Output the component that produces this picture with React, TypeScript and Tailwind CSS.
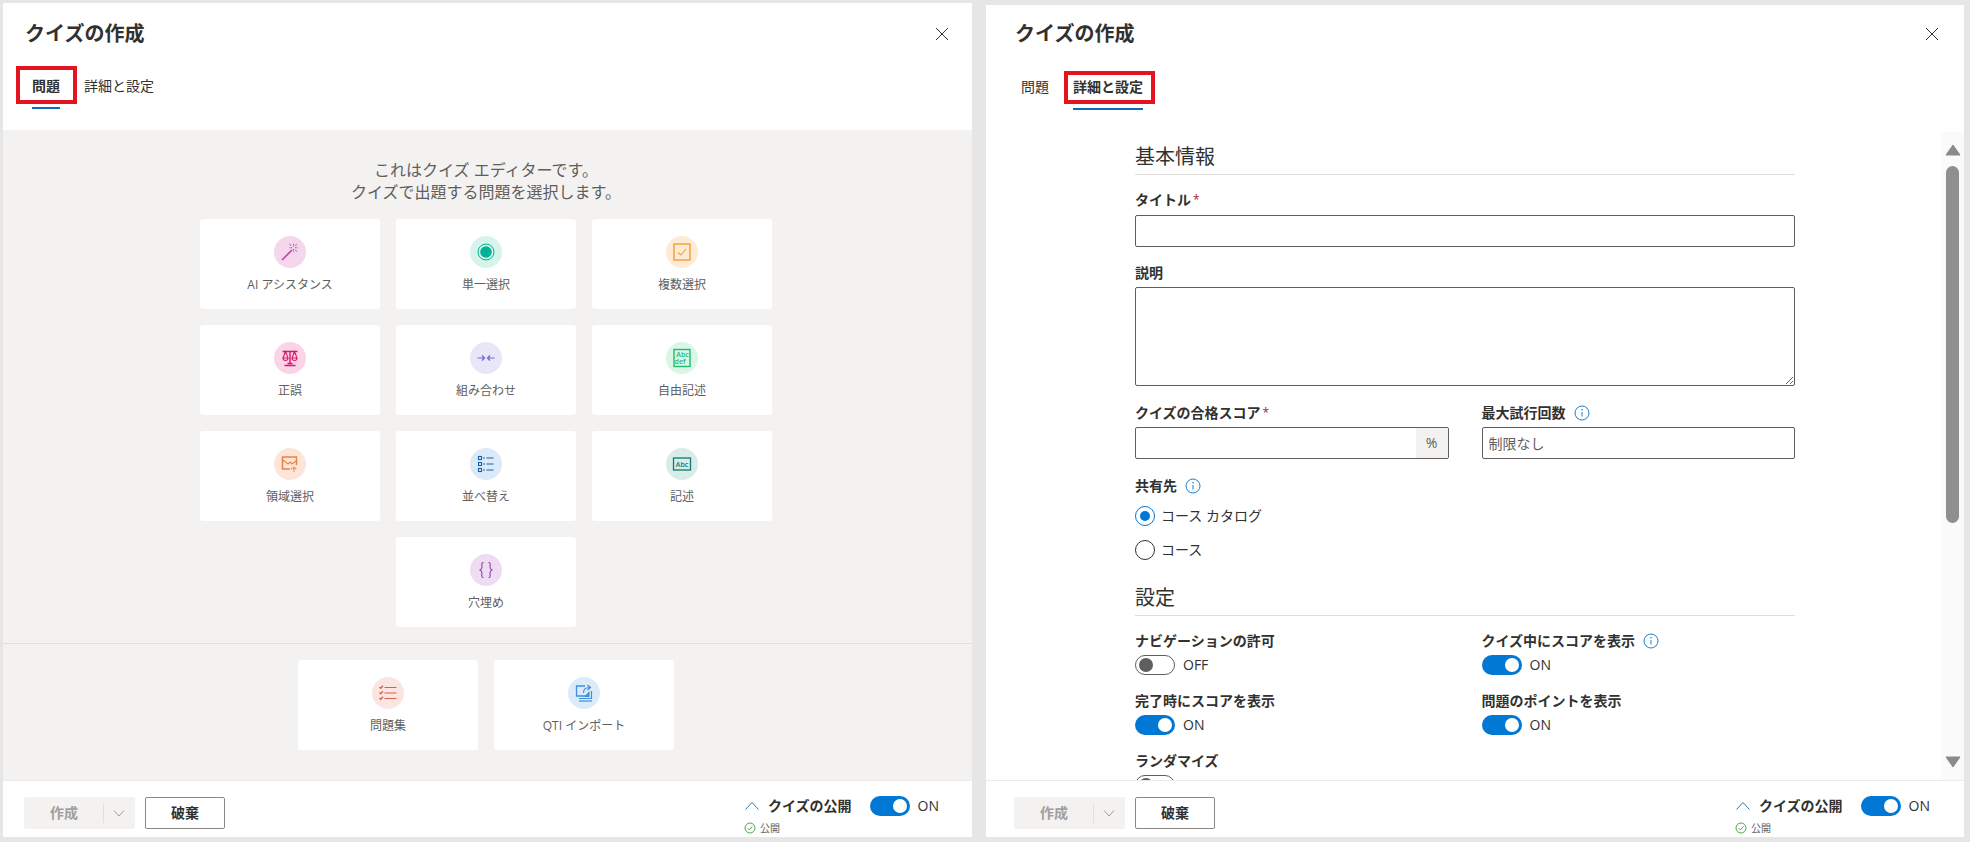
import type { ReactNode } from 'react';

const Svg = ({ children, className = '' }: { children: ReactNode; className?: string }) => (
  <svg viewBox="0 0 20 20" className={`w-5 h-5 ${className}`} fill="none" stroke="currentColor">
    {children}
  </svg>
);

const WandIcon = () => (
  <Svg className="text-[#c23c9e]">
    <path d="M2 18L12 8" strokeWidth="1.5" />
    <path d="M13.500 2v2.500M13.500 7v2.500M9.500 5.800h2.500M15 5.800h3M15.500 3.500l1.500-1.500M15.500 8l1.500 1.500M11 3.500L9.500 2" strokeWidth="1.100" strokeDasharray="1 .5" />
  </Svg>
);
const RadioIcon = () => (
  <Svg className="text-[#00b294]">
    <circle cx="10" cy="10" r="8" strokeWidth="1" />
    <circle cx="10" cy="10" r="5.800" fill="currentColor" stroke="none" />
  </Svg>
);
const CheckIcon = () => (
  <Svg className="text-[#f5a142]">
    <rect x="2" y="2" width="16" height="16" strokeWidth="1.500" />
    <path d="M6 10.500l3 2.500 5-6" strokeWidth="1.100" />
  </Svg>
);
const ScalesIcon = () => (
  <Svg className="text-[#d8186f]">
    <path d="M2.500 3.500h15M10 3.500v12M4.500 17.500h11M7.500 15.500h5" strokeWidth="1.400" />
    <path d="M5.500 3.500L3 10h5zM14.500 3.500L12 10h5zM3 10a2.500 2.500 0 0 0 5 0M12 10a2.500 2.500 0 0 0 5 0" strokeWidth="1.100" />
  </Svg>
);
const MatchIcon = () => (
  <Svg className="text-[#6a68d4]">
    <path d="M1.500 10h7M6 7.500L8.500 10 6 12.500M18.500 10h-7M14 7.500L11.500 10l2.500 2.500" strokeWidth="1.200" />
  </Svg>
);
const BoxTextIcon = () => (
  <Svg className="text-[#22bb72]">
    <rect x="2" y="1.500" width="16" height="17" strokeWidth="1.400" />
    <text x="10.500" y="8.500" fontSize="7" fontWeight="600" textAnchor="middle" fill="currentColor" stroke="none" fontFamily="Open Sans">Abc</text>
    <text x="8" y="15.500" fontSize="7" fontWeight="600" textAnchor="middle" fill="currentColor" stroke="none" fontFamily="Open Sans">def</text>
  </Svg>
);
const AreaIcon = () => (
  <Svg className="text-[#e9843f]">
    <path d="M16.500 11V3H2.500v12H10" strokeWidth="1.500" />
    <path d="M3 6l5 4 2-2 2 2 4-3" strokeWidth="1.100" />
    <path d="M14 12.500v6M11 14.500h6" strokeWidth="1.400" strokeDasharray="1.300 .7" />
  </Svg>
);
const OrderIcon = () => (
  <Svg className="text-[#1264b5]">
    <rect x="2.500" y="2.500" width="3" height="3" strokeWidth="1.100" />
    <rect x="2.500" y="8.500" width="3" height="3" strokeWidth="1.100" />
    <rect x="2.500" y="14.500" width="3" height="3" strokeWidth="1.100" />
    <path d="M7 4h2M10.500 4h7M7 10h2M10.500 10h7M7 16h2M10.500 16h7" strokeWidth="1.100" />
  </Svg>
);
const AbcIcon = () => (
  <Svg className="text-[#12796f]">
    <rect x="1.500" y="4" width="17" height="12" strokeWidth="1.300" />
    <text x="10" y="12.500" fontSize="7" fontWeight="600" textAnchor="middle" fill="currentColor" stroke="none" fontFamily="Open Sans">Abc</text>
  </Svg>
);
const BracesIcon = () => (
  <Svg className="text-[#8d44ad]">
    <path d="M7.500 2.500C5 2.500 6 5 6 7s-1 2.500-2 3c1 .5 2 1 2 3s-1 4.500 1.500 4.500" strokeWidth="1.100" />
    <path d="M12.500 2.500C15 2.500 14 5 14 7s1 2.500 2 3c-1 .5-2 1-2 3s1 4.500-1.500 4.500" strokeWidth="1.100" />
  </Svg>
);
const BankIcon = () => (
  <Svg className="text-[#d2644f]">
    <path d="M6.500 4.500h12M6.500 10h12M6.500 15.500h12" strokeWidth="1.200" />
    <path d="M1.500 4l1.200 1.200L5 2.800M1.500 9.500l1.200 1.200L5 8.300M1.500 15l1.200 1.200L5 13.800" strokeWidth="1.300" />
  </Svg>
);
const ImportIcon = () => (
  <Svg className="text-[#3d8fdb]">
    <path d="M11 3H2.500v10H15" strokeWidth="1.300" />
    <path d="M5 15.500h12.500V8" strokeWidth="1.200" />
    <path d="M5 18h13" strokeWidth="1.200" />
    <path d="M15.500 8V14H10z" fill="currentColor" stroke="none" />
    <path d="M9.500 10c0-3.500 2.500-5.500 6-5.500M13.500 2l3 2.500-3 2.500" strokeWidth="1.200" />
  </Svg>
);

const Chevron = ({ up = false, className = '' }: { up?: boolean; className?: string }) => (
  <svg viewBox="0 0 16 16" className={`w-4 h-4 ${className}`} fill="none" stroke="currentColor" strokeWidth="1">
    <path d={up ? 'M1.500 11.500L8 4.500l6.500 7' : 'M3 5.500L8 11l5-5.500'} />
  </svg>
);

const Close = () => (
  <svg viewBox="0 0 14 14" className="w-3.5 h-3.5 text-[#323130]" fill="none" stroke="currentColor" strokeWidth="1">
    <path d="M1 1l12 12M13 1L1 13" />
  </svg>
);

const Info = () => (
  <svg viewBox="0 0 16 16" className="w-4 h-4 text-[#1a7fce]" fill="none" stroke="currentColor">
    <circle cx="8" cy="8" r="7" strokeWidth="1" />
    <path d="M8 7v4.500" strokeWidth="1" />
    <circle cx="8" cy="4.800" r=".8" fill="currentColor" stroke="none" />
  </svg>
);

function Toggle({ on = true }: { on?: boolean }) {
  return (
    <div className={`w-10 h-5 rounded-full flex items-center px-[3px] ${on ? 'bg-[#0078d4] justify-end' : 'bg-white border border-[#605e5c] justify-start'}`}>
      <div className={`w-3.5 h-3.5 rounded-full ${on ? 'bg-white' : 'bg-[#605e5c]'}`} />
    </div>
  );
}

function ToggleRow({ on = true }: { on?: boolean }) {
  return (
    <div className="flex items-center gap-2 mt-1 h-5">
      <Toggle on={on} />
      <span className="text-sm text-[#323130]">{on ? 'ON' : 'OFF'}</span>
    </div>
  );
}

function Card({ icon, label, circle }: { icon: ReactNode; label: string; circle: string }) {
  return (
    <div className="w-[180px] h-[90px] bg-white rounded-[3px] flex flex-col items-center pt-[17px]">
      <div className={`w-8 h-8 rounded-full flex items-center justify-center ${circle}`}>{icon}</div>
      <span className="mt-2 text-xs leading-[18px] text-[#605e5c]">{label}</span>
    </div>
  );
}

function Tabs({ active, tabInset }: { active: number; tabInset: string }) {
  const names = ['問題', '詳細と設定'];
  return (
    <div className={`flex gap-6 ${tabInset}`}>
      {names.map((name, i) => (
        <div key={name} className="relative">
          <div className={`text-sm leading-5 text-[#323130] ${i === active ? 'font-semibold' : ''}`}>{name}</div>
          <div className={`mt-[11px] h-0.5 ${i === active ? 'bg-[#0f6cbd]' : 'bg-transparent'}`} />
          {i === active && (
            <div className={`absolute border-4 border-[#e3141f] ${i === 0 ? '-left-4 -right-[17px] -top-[10px] h-[38px]' : '-left-[9px] -right-3 -top-[6px] h-[33px]'}`} />
          )}
        </div>
      ))}
    </div>
  );
}

function Footer({ inset, rightPad }: { inset: string; rightPad: string }) {
  return (
    <div className={`h-[57px] shrink-0 border-t border-[#edebe9] bg-white flex justify-between ${inset}`}>
      <div className="flex gap-2.5 pt-4">
        <div className="w-[111px] h-8 bg-[#f3f2f1] rounded-[2px] flex items-center text-[#a19f9d]">
          <span className="w-[80px] pl-[26px] text-sm font-semibold border-r border-[#e1dfdd]">作成</span>
          <Chevron className="ml-[7px] text-[#a19f9d]" />
        </div>
        <div className="w-20 h-8 border border-[#8a8886] rounded-[2px] flex items-center justify-center text-sm font-semibold text-[#323130]">破棄</div>
      </div>
      <div className={`pt-[15px] ${rightPad}`}>
        <div className="flex items-center h-5">
          <Chevron up className="text-[#2a7ab9]" />
          <span className="ml-2 text-sm font-semibold text-[#323130]">クイズの公開</span>
          <div className="ml-[18px]"><Toggle /></div>
          <span className="ml-2 text-sm text-[#323130]">ON</span>
        </div>
        <div className="mt-[5px] flex items-center gap-1 text-[10px] leading-[14px] text-[#605e5c]">
          <svg viewBox="0 0 12 12" className="w-3 h-3 text-[#3b9a3b]" fill="none" stroke="currentColor" strokeWidth=".9">
            <circle cx="6" cy="6" r="5" />
            <path d="M3.700 6.200l1.700 1.700 3-3.500" />
          </svg>
          公開
        </div>
      </div>
    </div>
  );
}

function Label({ children, required, info }: { children: ReactNode; required?: boolean; info?: boolean }) {
  return (
    <div className="flex items-center h-5 text-sm font-semibold text-[#323130]">
      {children}
      {required && <span className="ml-0.5 text-xs font-normal text-[#a4262c]">*</span>}
      {info && <span className="ml-2"><Info /></span>}
    </div>
  );
}

function Radio({ label, on }: { label: string; on?: boolean }) {
  return (
    <div className="flex items-center gap-1.5 h-5 text-sm text-[#323130]">
      <div className={`w-5 h-5 rounded-full border flex items-center justify-center ${on ? 'border-[#0078d4]' : 'border-[#323130]'}`}>
        {on && <div className="w-2.5 h-2.5 rounded-full bg-[#0078d4]" />}
      </div>
      {label}
    </div>
  );
}

const questionCards = [
  { label: 'AI アシスタンス', circle: 'bg-[#f4d7ec]', icon: <WandIcon /> },
  { label: '単一選択', circle: 'bg-[#d6f3ec]', icon: <RadioIcon /> },
  { label: '複数選択', circle: 'bg-[#fdebd6]', icon: <CheckIcon /> },
  { label: '正誤', circle: 'bg-[#fbd5e7]', icon: <ScalesIcon /> },
  { label: '組み合わせ', circle: 'bg-[#e8e7f7]', icon: <MatchIcon /> },
  { label: '自由記述', circle: 'bg-[#d9f6e7]', icon: <BoxTextIcon /> },
  { label: '領域選択', circle: 'bg-[#fde5d9]', icon: <AreaIcon /> },
  { label: '並べ替え', circle: 'bg-[#dce9f6]', icon: <OrderIcon /> },
  { label: '記述', circle: 'bg-[#d8ecea]', icon: <AbcIcon /> },
];

export default function App() {
  const inputCls = 'block w-full h-8 border border-[#605e5c] rounded-[2px] bg-white px-1.5 text-sm text-[#323130] placeholder:text-[#605e5c] outline-none';
  return (
    <div className="w-[1970px] h-[842px] overflow-hidden bg-[#e6e6e6] flex gap-3.5 pl-[3px] font-['Open_Sans','Noto_Sans_CJK_JP',sans-serif]">
      {/* 問題タブ */}
      <div className="w-[969px] h-[834px] mt-[3px] bg-white flex flex-col">
        <div className="flex items-center justify-between pt-[17px] pl-[22px] pr-[23px]">
          <h1 className="text-xl leading-7 font-semibold text-[#323130]">クイズの作成</h1>
          <Close />
        </div>
        <div className="mt-7 pb-[21px]">
          <Tabs active={0} tabInset="pl-[29px]" />
        </div>
        <div className="flex-1 min-h-0 bg-[#f3f2f1] pt-[29px] flex flex-col">
          <p className="text-center text-base leading-[22px] text-[#605e5c] pr-[3px]">
            これはクイズ エディターです。
            <br />
            クイズで出題する問題を選択します。
          </p>
          <div className="mt-4 grid grid-cols-[180px_180px_180px] gap-4 justify-center pr-[3px]">
            {questionCards.map((c) => (
              <Card key={c.label} {...c} />
            ))}
            <div className="col-start-2">
              <Card label="穴埋め" circle="bg-[#eddcf2]" icon={<BracesIcon />} />
            </div>
          </div>
          <div className="mt-4 border-t border-[#e1dfdd]" />
          <div className="mt-4 flex gap-4 justify-center pr-[3px]">
            <Card label="問題集" circle="bg-[#fbe5e1]" icon={<BankIcon />} />
            <Card label="QTI インポート" circle="bg-[#dcebf9]" icon={<ImportIcon />} />
          </div>
        </div>
        <Footer inset="pl-[21px]" rightPad="pr-[33px]" />
      </div>

      {/* 詳細と設定タブ */}
      <div className="w-[978px] h-[832px] mt-[5px] bg-white flex flex-col">
        <div className="flex items-center justify-between pt-[15px] pl-[29px] pr-[25px]">
          <h1 className="text-xl leading-7 font-semibold text-[#323130]">クイズの作成</h1>
          <Close />
        </div>
        <div className="mt-[29px] pb-[22px]">
          <Tabs active={1} tabInset="pl-[35px]" />
        </div>
        <div className="flex-1 min-h-0 overflow-hidden flex">
          <div className="flex-1 pl-[149px] pr-[146px] pt-[11px]">
            <h2 className="text-xl leading-7 text-[#323130] pb-[3px] border-b border-[#e1dfdd]">基本情報</h2>
            <div className="mt-[15px]"><Label required>タイトル</Label></div>
            <input className={`mt-[5px] ${inputCls}`} />
            <div className="mt-4"><Label>説明</Label></div>
            <textarea className="mt-1 block w-full h-[99px] border border-[#605e5c] rounded-[2px] bg-white resize-y outline-none" />
            <div className="mt-[17px] grid grid-cols-2 gap-x-[33px]">
              <div>
                <Label required>クイズの合格スコア</Label>
                <div className="mt-1 h-8 border border-[#605e5c] rounded-[2px] flex overflow-hidden">
                  <div className="flex-1" />
                  <div className="w-8 bg-[#f3f2f1] flex items-center justify-center text-sm text-[#605e5c]">%</div>
                </div>
              </div>
              <div>
                <Label info>最大試行回数</Label>
                <input className={`mt-1 ${inputCls}`} placeholder="制限なし" />
              </div>
            </div>
            <div className="mt-[17px]"><Label info>共有先</Label></div>
            <div className="mt-2.5"><Radio label="コース カタログ" on /></div>
            <div className="mt-3.5"><Radio label="コース" /></div>
            <h2 className="mt-6 text-xl leading-7 text-[#323130] pb-[3px] border-b border-[#e1dfdd]">設定</h2>
            <div className="mt-[15px] grid grid-cols-2 gap-x-[33px] gap-y-4">
              <div><Label>ナビゲーションの許可</Label><ToggleRow on={false} /></div>
              <div><Label info>クイズ中にスコアを表示</Label><ToggleRow /></div>
              <div><Label>完了時にスコアを表示</Label><ToggleRow /></div>
              <div><Label>問題のポイントを表示</Label><ToggleRow /></div>
              <div><Label>ランダマイズ</Label><ToggleRow on={false} /></div>
            </div>
          </div>
          <div className="w-[23px] shrink-0 bg-[#fafafa] flex flex-col items-center pt-3 pb-3">
            <svg viewBox="0 0 16 12" className="w-4 h-3 text-[#8a8a8a]" fill="currentColor" stroke="currentColor" strokeLinejoin="round"><path d="M8 1l7 10H1z" /></svg>
            <div className="mt-2.5 w-[13px] h-[357px] rounded-full bg-[#8f8f8f]" />
            <svg viewBox="0 0 16 12" className="mt-auto w-4 h-3 text-[#8a8a8a]" fill="currentColor" stroke="currentColor" strokeLinejoin="round"><path d="M8 11l7-10H1z" /></svg>
          </div>
        </div>
        <Footer inset="pl-[28px]" rightPad="pr-[34px]" />
      </div>
    </div>
  );
}
